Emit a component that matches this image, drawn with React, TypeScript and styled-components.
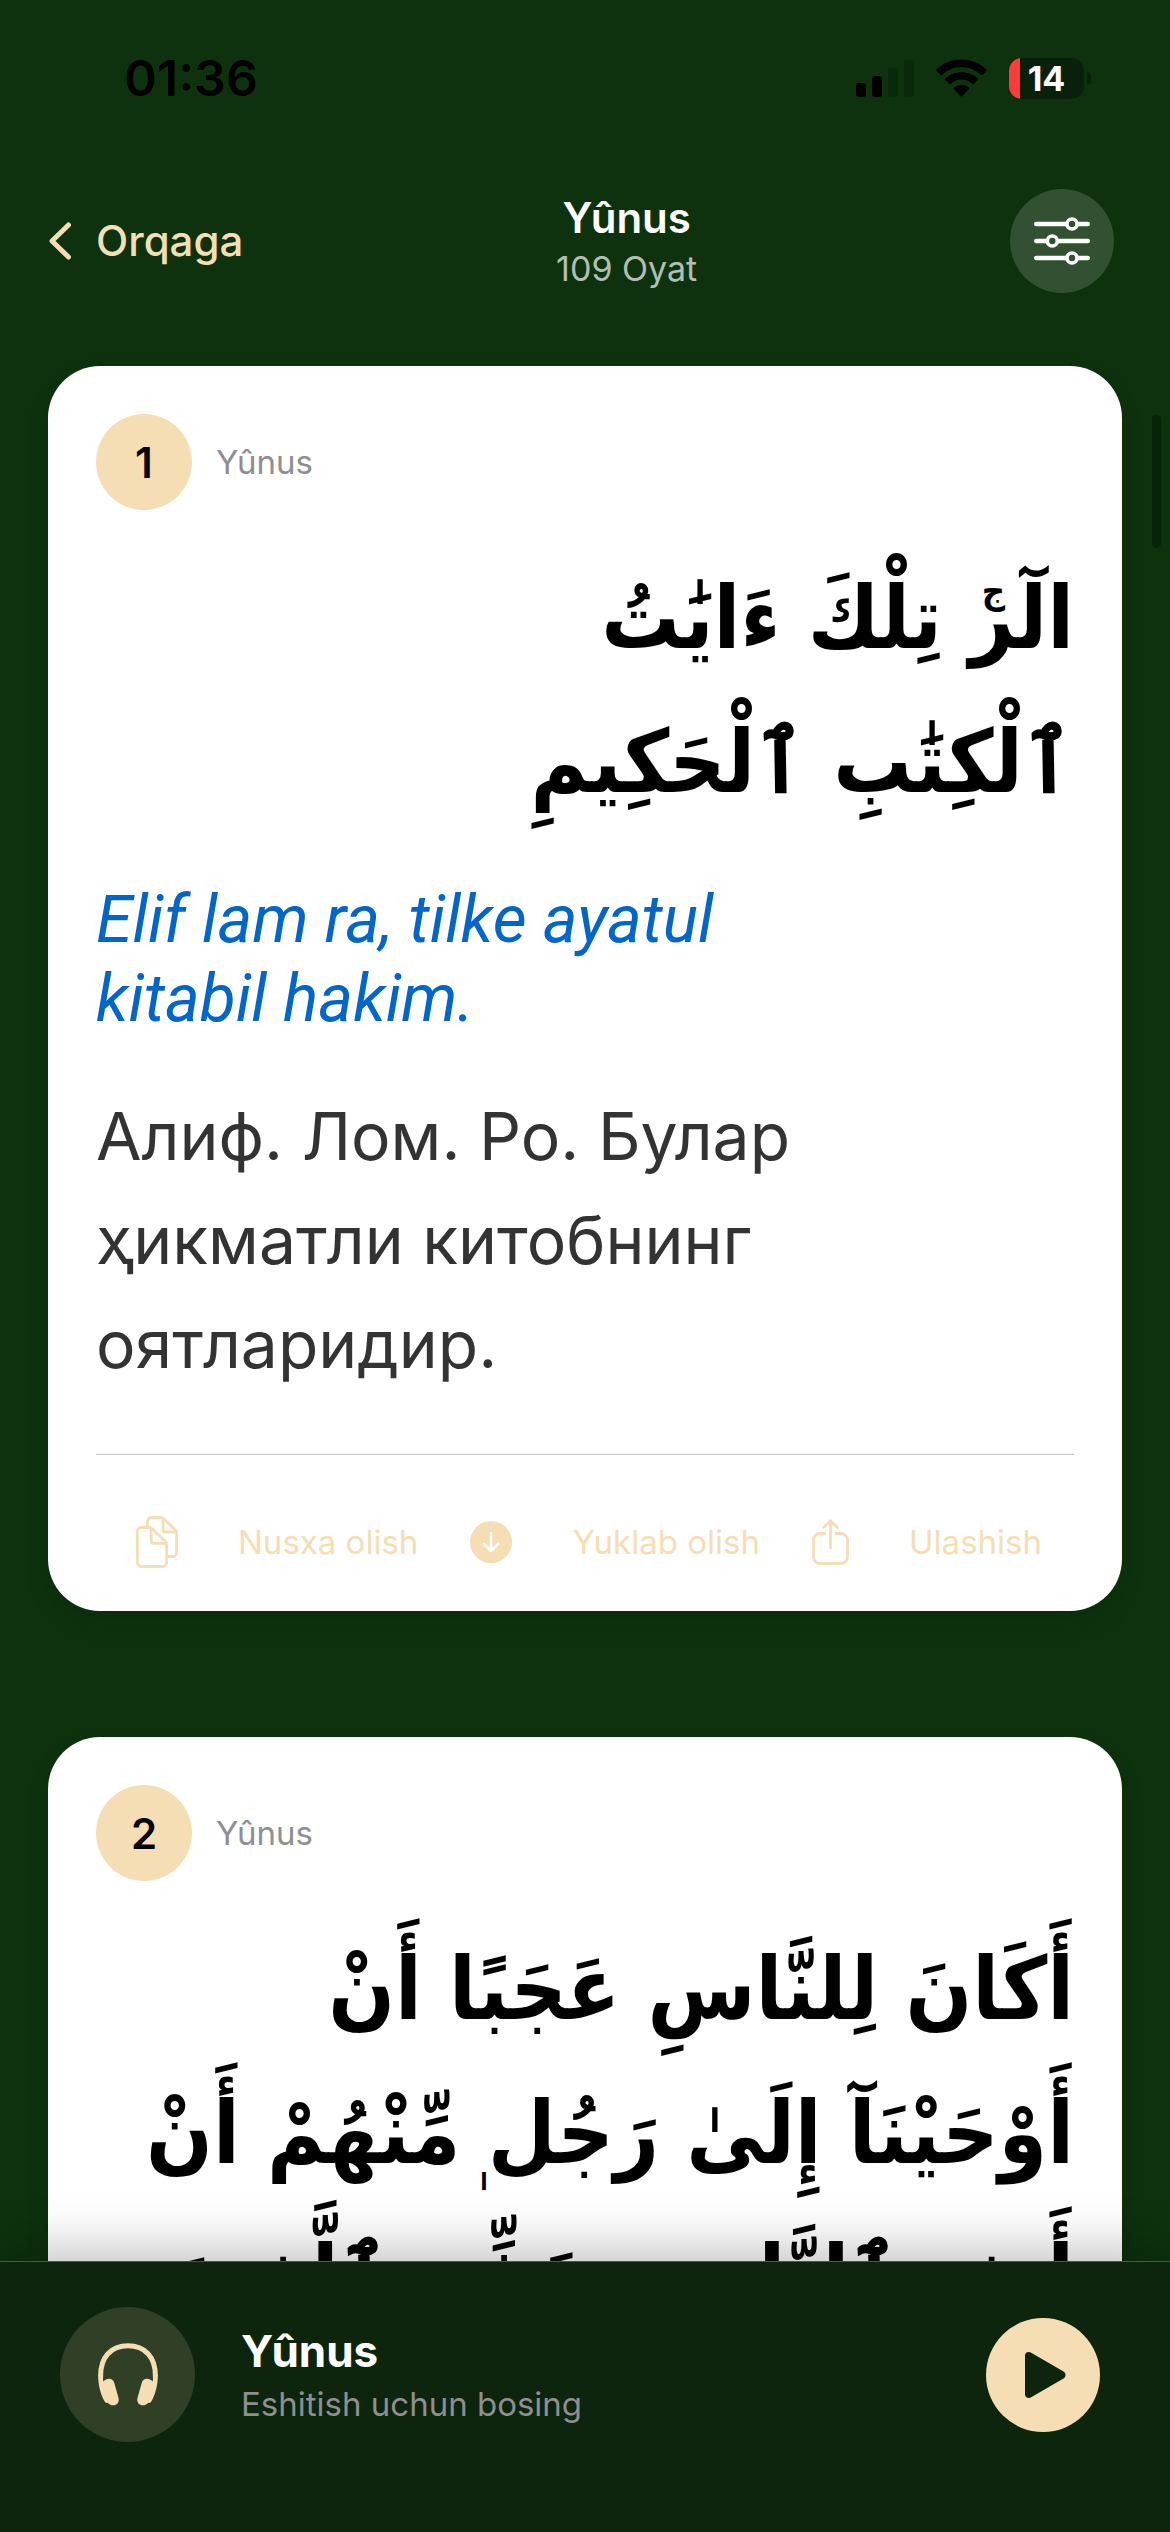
import React from "react";
import styled, { createGlobalStyle } from "styled-components";

const color = {
  page: "#0d320d",
  player: "#0c250c",
  sand: "#f5deb3",
  gray: "#8e8e93",
  blue: "#0066cc",
  body: "#333333",
};

const GlobalStyle = createGlobalStyle`
  *, *::before, *::after { box-sizing: border-box; }
  body {
    margin: 0;
    background: ${color.page};
    font-family: Inter, "Noto Sans", sans-serif;
    -webkit-font-smoothing: antialiased;
  }
  h1, h2, p { margin: 0; font-weight: 400; }
  button {
    margin: 0;
    padding: 0;
    border: 0;
    background: none;
    font: inherit;
    color: inherit;
    cursor: pointer;
  }
  svg { display: block; flex: none; }
`;

const Screen = styled.div`
  position: relative;
  display: flex;
  flex-direction: column;
  height: 100vh;
  overflow: hidden;
  background: ${color.page};
`;

const StatusBar = styled.div`
  display: flex;
  flex: none;
  align-items: center;
  justify-content: space-between;
  height: 156px;
  padding: 0 79px 0 124px;
  color: #000;
`;

const Clock = styled.time`
  font-size: 50px;
  line-height: 60px;
  font-weight: 600;
`;

const StatusIcons = styled.div`
  display: flex;
  align-items: center;
  gap: 22px;
`;

const Battery = styled.div`
  display: flex;
  align-items: center;
  gap: 3px;
`;

const BatteryBody = styled.div`
  display: flex;
  align-items: center;
  justify-content: center;
  width: 75px;
  height: 41px;
  border-radius: 13px;
  background: linear-gradient(to right, #ff3b3b 11px, #09210a 11px);
  color: #fff;
  font-size: 34px;
  line-height: 41px;
  font-weight: 700;
`;

const BatteryTip = styled.div`
  width: 4px;
  height: 13px;
  border-radius: 0 4px 4px 0;
  background: #09210a;
`;

const NavBar = styled.header`
  display: flex;
  flex: none;
  align-items: center;
  justify-content: space-between;
  padding: 33px 56px 25px 48px;
`;

const BackButton = styled.button`
  display: flex;
  align-items: center;
  gap: 24px;
  color: ${color.sand};
  font-size: 42px;
  line-height: 54px;
  font-weight: 500;
`;

const NavTitle = styled.div`
  display: flex;
  flex-direction: column;
  align-items: center;
  padding-top: 2px;
`;

const Heading = styled.h1`
  color: #fff;
  font-size: 42px;
  line-height: 54px;
  font-weight: 600;
`;

const Count = styled.p`
  color: rgba(255, 255, 255, 0.7);
  font-size: 34px;
  line-height: 48px;
`;

const RoundButton = styled.button<{ $size: number; $fill: string }>`
  display: flex;
  flex: none;
  align-items: center;
  justify-content: center;
  width: ${(p) => p.$size}px;
  height: ${(p) => p.$size}px;
  border-radius: 50%;
  background: ${(p) => p.$fill};
`;

const VerseList = styled.main`
  display: flex;
  flex: 1;
  flex-direction: column;
  gap: 126px;
  min-height: 0;
  padding: 48px 48px 0;
  overflow: hidden;
`;

const Card = styled.article`
  flex: none;
  padding: 48px 48px 43px;
  border-radius: 52px;
  background: #fff;
  box-shadow: 0 12px 24px rgba(0, 0, 0, 0.1);
`;

const CardHead = styled.div`
  display: flex;
  align-items: center;
  gap: 24px;
`;

const Badge = styled.span`
  display: flex;
  align-items: center;
  justify-content: center;
  width: 96px;
  height: 96px;
  border-radius: 50%;
  background: ${color.sand};
  color: #000;
  font-size: 42px;
  font-weight: 600;
`;

const SurahName = styled.span`
  color: ${color.gray};
  font-size: 33px;
  line-height: 48px;
`;

const Line = styled.span`
  display: block;
  white-space: nowrap;
`;

const Arabic = styled.p`
  margin-top: 36px;
  color: #000;
  font-family: "DejaVu Sans Condensed", "DejaVu Sans", sans-serif;
  font-size: 87px;
  line-height: 144px;
  font-weight: 700;
  font-stretch: condensed;
`;

const MarkAnchor = styled.span`
  position: relative;
`;

const Mark = styled.span<{ $low?: boolean }>`
  position: absolute;
  right: ${(p) => (p.$low ? "0" : "-36px")};
  top: ${(p) => (p.$low ? "76px" : "0")};
  font-size: ${(p) => (p.$low ? "24px" : "36px")};
  line-height: 48px;
`;

const Transliteration = styled.p`
  margin-top: 46px;
  color: ${color.blue};
  font-family: Roboto, sans-serif;
  font-size: 66px;
  line-height: 79px;
  font-style: italic;
`;

const Translation = styled.p`
  margin-top: 46px;
  color: ${color.body};
  font-size: 66px;
  line-height: 104px;
`;

const Actions = styled.div`
  display: flex;
  align-items: center;
  justify-content: space-between;
  margin-top: 58px;
  padding: 61px 32px 0 40px;
  border-top: 1px solid #c6c6c8;
`;

const ActionButton = styled.button`
  display: flex;
  align-items: center;
  gap: 60px;
  height: 52px;
  color: ${color.sand};
  font-size: 33px;
  line-height: 48px;
`;

const ScrollThumb = styled.div`
  position: absolute;
  top: 415px;
  right: 9px;
  width: 9px;
  height: 133px;
  border-radius: 5px;
  background: #09220a;
`;

const Player = styled.footer`
  position: relative;
  display: flex;
  flex: none;
  align-items: center;
  gap: 46px;
  padding: 45px 70px 90px 60px;
  border-top: 1px solid #4a5a41;
  background: ${color.player};
  box-shadow: 0 -12px 48px rgba(0, 0, 0, 0.24);
`;

const CoverDisc = styled.div`
  display: flex;
  flex: none;
  align-items: center;
  justify-content: center;
  width: 135px;
  height: 135px;
  border-radius: 50%;
  background: #2f4026;
`;

const PlayerText = styled.div`
  flex: 1;
`;

const PlayerTitle = styled.h2`
  color: #fff;
  font-size: 44px;
  line-height: 58px;
  font-weight: 700;
`;

const PlayerHint = styled.p`
  color: ${color.gray};
  font-size: 33px;
  line-height: 48px;
`;

const SignalIcon = () => (
  <svg width="58" height="37" viewBox="0 0 58 37" aria-hidden="true">
    <rect x="0" y="23" width="10" height="14" rx="3" />
    <rect x="16" y="16" width="10" height="21" rx="3" />
    <rect x="32" y="8" width="10" height="29" rx="3" fill="#0a280a" />
    <rect x="48" y="0" width="10" height="37" rx="3" fill="#0a280a" />
  </svg>
);

const WifiIcon = () => (
  <svg width="51" height="38" viewBox="0 0 51 38" aria-hidden="true">
    <path d="M25.5 0.5C35.4 0.5 44.300 4.300 50.300 10.300C50.900 10.900 50.900 11.600 50.300 12.200L46.600 15.700C46 16.300 45.300 16.300 44.700 15.700C39.700 10.900 33 8 25.500 8C18 8 11.300 10.900 6.300 15.700C5.700 16.300 5 16.300 4.400 15.700L0.700 12.200C0.100 11.600 0.100 10.900 0.700 10.300C6.700 4.300 15.600 0.500 25.500 0.500Z" />
    <path d="M25.500 13.200C32 13.200 37.600 15.600 41.600 19.300C42.200 19.900 42.200 20.600 41.600 21.200L37.900 24.700C37.300 25.300 36.600 25.300 36 24.700C33.200 22.200 29.600 20.600 25.500 20.600C21.400 20.600 17.800 22.200 15 24.700C14.400 25.300 13.700 25.300 13.100 24.700L9.400 21.200C8.800 20.600 8.800 19.900 9.400 19.300C13.400 15.600 19 13.200 25.500 13.200Z" />
    <path d="M25.500 26C28.400 26 30.800 26.900 32.700 28.300C33.300 28.800 33.300 29.600 32.700 30.200L26.500 37C25.900 37.600 25.100 37.600 24.500 37L18.300 30.200C17.700 29.600 17.700 28.800 18.300 28.300C20.200 26.900 22.600 26 25.500 26Z" />
  </svg>
);

const ChevronIcon = () => (
  <svg width="24" height="38" viewBox="0 0 24 38" fill="none" stroke="currentColor" strokeWidth="5" strokeLinecap="round" strokeLinejoin="round" aria-hidden="true">
    <path d="M20.500 3L4 19L20.500 35" />
  </svg>
);

const SlidersIcon = () => (
  <svg width="56" height="48" viewBox="0 0 56 48" fill="none" stroke="#fff" strokeLinecap="round" aria-hidden="true">
    <path strokeWidth="4.600" d="M2.300 7H30M46 7H53.700M2.300 24H10M26 24H53.700M2.300 41H30M46 41H53.700" />
    <path strokeWidth="4.600" strokeLinecap="butt" d="M30 7H32.500M43.500 7H46M10 24H13M24 24H26M30 41H32.500M43.500 41H46" />
    <circle cx="38" cy="7" r="5" strokeWidth="3.600" />
    <circle cx="18.300" cy="24" r="5" strokeWidth="3.600" />
    <circle cx="38" cy="41" r="5" strokeWidth="3.600" />
  </svg>
);

const CopyIcon = () => (
  <svg width="42" height="52" viewBox="0 0 42 52" fill="none" stroke="currentColor" strokeWidth="2.800" strokeLinejoin="round" aria-hidden="true">
    <path d="M11.400 11V5.500A4 4 0 0 1 15.400 1.500H24.500Q26.500 1.500 28 3L39 13.700Q40.600 15.200 40.600 17V36.500A4 4 0 0 1 36.600 40.500H32" />
    <path d="M27 2V13.500Q27 16 29.500 16H40" />
    <path d="M5.400 11.500H13Q15 11.500 16.500 13L29 25Q30.600 26.500 30.600 28.500V46.500A4 4 0 0 1 26.600 50.500H5.400A4 4 0 0 1 1.400 46.500V15.500A4 4 0 0 1 5.400 11.500Z" />
    <path d="M15.200 12V24.500Q15.200 27.300 18 27.300H30" />
  </svg>
);

const DownloadIcon = () => (
  <svg width="42" height="42" viewBox="0 0 42 42" fill="none" aria-hidden="true">
    <circle cx="21" cy="21" r="21" fill="currentColor" />
    <path d="M21 12V29.500M14 23L21 30L28 23" stroke="#fff" strokeWidth="2.600" strokeLinecap="round" strokeLinejoin="round" />
  </svg>
);

const ShareIcon = () => (
  <svg width="37" height="46" viewBox="0 0 37 46" fill="none" stroke="currentColor" strokeWidth="2.800" aria-hidden="true">
    <path d="M14 14.500H8A6.500 6.500 0 0 0 1.500 21V38A6.500 6.500 0 0 0 8 44.500H29A6.500 6.500 0 0 0 35.500 38V21A6.500 6.500 0 0 0 29 14.500H23" />
    <path d="M18.500 29V2M11.500 8.500L18.500 1.700L25.500 8.500" strokeLinecap="round" strokeLinejoin="round" />
  </svg>
);

const HeadphonesIcon = () => (
  <svg width="60" height="63" viewBox="0 0 60 63" fill={color.sand} aria-hidden="true">
    <path d="M2.600 33C2.600 14 13 2.800 30 2.800C47 2.800 57.400 14 57.400 33" fill="none" stroke={color.sand} strokeWidth="5" />
    <path d="M0.100 32C0.200 43 3 52.500 7 59Q8 60.300 10 60C12.500 63 17.500 63 19.500 60.500C21 58.700 21 56.500 20.400 54.500L16.300 40C15 35.500 11 34.800 7.500 36.800Q5.600 38 5.100 38.500V32Z" />
    <path d="M59.900 32C59.800 43 57 52.500 53 59Q52 60.300 50 60C47.500 63 42.500 63 40.500 60.500C39 58.700 39 56.500 39.600 54.500L43.700 40C45 35.500 49 34.800 52.500 36.800Q54.400 38 54.900 38.500V32Z" />
  </svg>
);

const PlayIcon = () => (
  <svg width="46" height="46" viewBox="0 0 46 46" fill={color.player} aria-hidden="true">
    <path transform="translate(5 0)" d="M0 3.500C0 0.300 3.500 -0.700 6.200 0.800L38.500 19.500C41.200 21.200 41.200 24.800 38.500 26.500L6.200 45.200C3.500 46.700 0 45.700 0 42.500Z" />
  </svg>
);

interface Verse {
  number: number;
  arabic: React.ReactNode[];
  transliteration: string[];
  translation: string[];
}

/* Pause sign: a small raised jeem over the preceding letter. */
const PauseSign = () => (
  <MarkAnchor>
    <Mark>ج</Mark>
  </MarkAnchor>
);

/* Subscript alef written under the end of a word. */
const LowAlef = () => (
  <MarkAnchor>
    <Mark $low>ا</Mark>
  </MarkAnchor>
);

const verses: Verse[] = [
  {
    number: 1,
    arabic: [
      <>
        الٓر
        <PauseSign /> تِلْكَ ءَايَٰتُ
      </>,
      "ٱلْكِتَٰبِ ٱلْحَكِيمِ",
    ],
    transliteration: ["Elif lam ra, tilke ayatul", "kitabil hakim."],
    translation: ["Алиф. Лом. Ро. Булар", "ҳикматли китобнинг", "оятларидир."],
  },
  {
    number: 2,
    arabic: [
      "أَكَانَ لِلنَّاسِ عَجَبًا أَنْ",
      <>
        أَوْحَيْنَآ إِلَىٰ رَجُل
        <LowAlef /> مِّنْهُمْ أَنْ
      </>,
      "أَنذِرِ ٱلنَّاسَ وَبَشِّرِ ٱلَّذِينَ",
    ],
    transliteration: [],
    translation: [],
  },
];

const lines = (items: React.ReactNode[]) => items.map((text, index) => <Line key={index}>{text}</Line>);

const VerseCard = ({ verse }: { verse: Verse }) => (
  <Card>
    <CardHead>
      <Badge>{verse.number}</Badge>
      <SurahName>Yûnus</SurahName>
    </CardHead>
    <Arabic lang="ar" dir="rtl">
      {lines(verse.arabic)}
    </Arabic>
    {verse.transliteration.length > 0 && <Transliteration>{lines(verse.transliteration)}</Transliteration>}
    {verse.translation.length > 0 && (
      <>
        <Translation lang="uz">{lines(verse.translation)}</Translation>
        <Actions>
          <ActionButton type="button">
            <CopyIcon />
            Nusxa olish
          </ActionButton>
          <ActionButton type="button">
            <DownloadIcon />
            Yuklab olish
          </ActionButton>
          <ActionButton type="button">
            <ShareIcon />
            Ulashish
          </ActionButton>
        </Actions>
      </>
    )}
  </Card>
);

export default function App() {
  return (
    <Screen>
      <GlobalStyle />
      <StatusBar>
        <Clock>01:36</Clock>
        <StatusIcons>
          <SignalIcon />
          <WifiIcon />
          <Battery>
            <BatteryBody>14</BatteryBody>
            <BatteryTip />
          </Battery>
        </StatusIcons>
      </StatusBar>
      <NavBar>
        <BackButton type="button">
          <ChevronIcon />
          Orqaga
        </BackButton>
        <NavTitle>
          <Heading>Yûnus</Heading>
          <Count>109 Oyat</Count>
        </NavTitle>
        <RoundButton type="button" aria-label="Sozlamalar" $size={104} $fill="#325132">
          <SlidersIcon />
        </RoundButton>
      </NavBar>
      <VerseList>
        {verses.map((verse) => (
          <VerseCard key={verse.number} verse={verse} />
        ))}
      </VerseList>
      <ScrollThumb />
      <Player>
        <CoverDisc>
          <HeadphonesIcon />
        </CoverDisc>
        <PlayerText>
          <PlayerTitle>Yûnus</PlayerTitle>
          <PlayerHint>Eshitish uchun bosing</PlayerHint>
        </PlayerText>
        <RoundButton type="button" aria-label="Tinglash" $size={114} $fill={color.sand}>
          <PlayIcon />
        </RoundButton>
      </Player>
    </Screen>
  );
}
